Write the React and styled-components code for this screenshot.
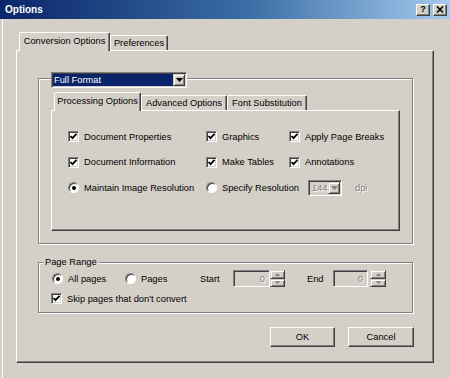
import React from 'react';
import styled, { createGlobalStyle } from 'styled-components';

const GlobalStyle = createGlobalStyle`
  html, body {
    margin: 0;
    padding: 0;
    background: #d4d0c8;
  }
  body {
    font-family: "Liberation Sans", Arial, sans-serif;
    font-size: 9.3px;
    color: #000;
  }
  #root {
    width: 450px;
    height: 378px;
    overflow: hidden;
  }
`;

const Window = styled.div`
  width: 450px;
  height: 378px;
  box-sizing: border-box;
  background: #d4d0c8;
  box-shadow: inset 2px 0 0 #d4d0c8, inset 3px 0 0 #fff;
  display: flex;
  flex-direction: column;
`;

const TitleBar = styled.div`
  height: 19px;
  flex: none;
  display: flex;
  align-items: center;
  justify-content: space-between;
  padding: 0 3px 0 5px;
  background: linear-gradient(to right, #0a246a 0%, #3a6ea5 55%, #a6caf0 100%);
`;

const Title = styled.span`
  color: #fff;
  font-weight: bold;
  font-size: 10px;
`;

const CaptionButtons = styled.div`
  display: flex;
  gap: 3px;
`;

const CaptionButton = styled.div`
  width: 14px;
  height: 12px;
  box-sizing: border-box;
  background: #d4d0c8;
  border: 1px solid;
  border-color: #fff #404040 #404040 #fff;
  box-shadow: inset -1px -1px 0 #808080;
  display: flex;
  align-items: center;
  justify-content: center;
  font-weight: bold;
  font-size: 9px;
  line-height: 1;
`;

const Body = styled.div`
  padding: 13px 0 0 16px;
`;

const TabStrip = styled.div`
  display: flex;
  align-items: flex-end;
  height: 18px;
  padding-left: ${(p) => p.$inset}px;
  margin-top: ${(p) => p.$top || 0}px;
  margin-left: ${(p) => p.$left || 0}px;
`;

const Tab = styled.div`
  box-sizing: border-box;
  width: ${(p) => p.$w}px;
  height: ${(p) => (p.$active ? 19 : 15)}px;
  margin-bottom: ${(p) => (p.$active ? -1 : 0)}px;
  padding-bottom: ${(p) => (p.$active ? 2 : 0)}px;
  position: relative;
  z-index: ${(p) => (p.$active ? 2 : 1)};
  background: #d4d0c8;
  border-top: 1px solid #fff;
  border-left: 1px solid #fff;
  border-right: 1px solid #404040;
  box-shadow: inset -1px 0 0 #808080;
  border-radius: 2px 2px 0 0;
  display: flex;
  align-items: center;
  justify-content: center;
  white-space: nowrap;
`;

const TabPanel = styled.div`
  box-sizing: border-box;
  width: ${(p) => p.$w}px;
  height: ${(p) => p.$h}px;
  margin-left: ${(p) => p.$left || 0}px;
  border: 1px solid;
  border-color: #fff #404040 #404040 #fff;
  box-shadow: inset -1px -1px 0 #808080;
  padding: ${(p) => p.$pad};
`;

const GroupBox = styled.div`
  box-sizing: border-box;
  width: 375px;
  height: ${(p) => p.$h}px;
  margin-top: ${(p) => p.$top || 0}px;
  border: 1px solid #808080;
  box-shadow: inset 1px 1px 0 #fff, 1px 1px 0 #fff;
  display: flex;
  flex-direction: column;
`;

const GroupCaption = styled.div`
  align-self: flex-start;
  margin: -6px 0 0 4px;
  padding: 0 2px;
  line-height: 11px;
  background: #d4d0c8;
`;

const Combo = styled.div`
  box-sizing: border-box;
  width: ${(p) => p.$w}px;
  height: ${(p) => p.$h}px;
  margin: ${(p) => p.$margin || 0};
  flex: none;
  border: 1px solid;
  border-color: #808080 #fff #fff #808080;
  box-shadow: inset 1px 1px 0 #404040, inset -1px -1px 0 #d4d0c8;
  background: ${(p) => (p.$disabled ? '#d4d0c8' : '#fff')};
  padding: 1px;
  display: flex;
  align-items: stretch;
`;

const ComboValue = styled.div`
  flex: 1;
  display: flex;
  align-items: center;
  padding-left: ${(p) => (p.$selected ? 1 : 2)}px;
  background: ${(p) => (p.$selected ? '#0a246a' : 'transparent')};
  color: ${(p) => (p.$selected ? '#fff' : '#808080')};
  text-shadow: ${(p) => (p.$selected ? 'none' : '1px 1px 0 #fff')};
  white-space: nowrap;
`;

const ArrowButton = styled.div`
  box-sizing: border-box;
  width: ${(p) => p.$w || 12}px;
  flex: none;
  background: #d4d0c8;
  border: 1px solid;
  border-color: #d4d0c8 #404040 #404040 #d4d0c8;
  box-shadow: inset 1px 1px 0 #fff, inset -1px -1px 0 #808080;
  display: flex;
  align-items: center;
  justify-content: center;
`;

const OptionGrid = styled.div`
  display: grid;
  grid-template-columns: 138px 83px auto;
  grid-auto-rows: 25.5px;
  align-items: center;
`;

const Option = styled.div`
  display: flex;
  align-items: center;
  gap: 5px;
  white-space: nowrap;
  grid-column: ${(p) => (p.$span ? `span ${p.$span}` : 'auto')};
`;

const CheckBox = styled.span`
  box-sizing: border-box;
  width: 11px;
  height: 11px;
  flex: none;
  background: #fff;
  border: 1px solid;
  border-color: #808080 #fff #fff #808080;
  box-shadow: inset 1px 1px 0 #404040, inset -1px -1px 0 #d4d0c8;
  display: flex;
  align-items: center;
  justify-content: center;
`;

const Radio = styled.span`
  box-sizing: border-box;
  width: 11px;
  height: 11px;
  flex: none;
  border-radius: 50%;
  background: #fff;
  border: 1px solid;
  border-color: #808080 #fff #fff #808080;
  box-shadow: inset 1px 1px 0 #404040;
  display: flex;
  align-items: center;
  justify-content: center;
`;

const RadioDot = styled.span`
  width: 4px;
  height: 4px;
  border-radius: 50%;
  background: #000;
`;

const DisabledText = styled.span`
  color: #808080;
  text-shadow: 1px 1px 0 #fff;
  margin-left: ${(p) => p.$left || 0}px;
`;

const RangeRow = styled.div`
  display: flex;
  align-items: center;
  height: ${(p) => p.$h}px;
  margin-top: ${(p) => p.$top}px;
  padding-left: ${(p) => p.$left}px;
`;

const Cell = styled.div`
  width: ${(p) => p.$w}px;
  flex: none;
  display: flex;
  align-items: center;
  gap: 5px;
  white-space: nowrap;
`;

const SpinField = styled.div`
  display: flex;
  height: 17px;
  gap: ${(p) => p.$gap || 0}px;
`;

const Field = styled.div`
  box-sizing: border-box;
  width: ${(p) => p.$w}px;
  height: 17px;
  border: 1px solid;
  border-color: #808080 #fff #fff #808080;
  box-shadow: inset 1px 1px 0 #404040, inset -1px -1px 0 #d4d0c8;
  background: #d4d0c8;
  color: #808080;
  text-shadow: 1px 1px 0 #fff;
  display: flex;
  align-items: center;
  justify-content: flex-end;
  padding-right: 4px;
`;

const Spinner = styled.div`
  width: ${(p) => p.$w}px;
  display: flex;
  flex-direction: column;
`;

const SpinButton = styled.div`
  flex: 1;
  box-sizing: border-box;
  background: #d4d0c8;
  border: 1px solid;
  border-color: #d4d0c8 #404040 #404040 #d4d0c8;
  box-shadow: inset 1px 1px 0 #fff, inset -1px -1px 0 #808080;
  display: flex;
  align-items: center;
  justify-content: center;
`;

const ButtonRow = styled.div`
  width: 376px;
  margin-top: 14px;
  display: flex;
  justify-content: flex-end;
  gap: 13px;
`;

const PushButton = styled.div`
  box-sizing: border-box;
  width: ${(p) => p.$w}px;
  height: 20px;
  background: #d4d0c8;
  border: 1px solid;
  border-color: #fff #404040 #404040 #fff;
  box-shadow: inset -1px -1px 0 #808080;
  display: flex;
  align-items: center;
  justify-content: center;
`;

const Check = () => (
  <svg width="9" height="9" viewBox="0 0 9 9">
    <polyline points="1.5,4 3.5,6.2 7.5,1.8" fill="none" stroke="#000" strokeWidth="1.8" />
  </svg>
);

const Arrow = ({ color = '#000', up }) => (
  <svg width="7" height="4" viewBox="0 0 7 4">
    <polygon points={up ? '0,4 7,4 3.5,0' : '0,0 7,0 3.5,4'} fill={color} />
  </svg>
);

const SmallArrow = ({ up }) => (
  <svg width="5" height="3" viewBox="0 0 5 3">
    <polygon points={up ? '0,3 5,3 2.5,0' : '0,0 5,0 2.5,3'} fill="#808080" />
  </svg>
);

const CloseGlyph = () => (
  <svg width="8" height="7" viewBox="0 0 8 7">
    <path d="M1 0.5 L7 6.5 M7 0.5 L1 6.5" stroke="#000" strokeWidth="1.6" />
  </svg>
);

const CheckOption = ({ label, span }) => (
  <Option $span={span}>
    <CheckBox><Check /></CheckBox>
    {label}
  </Option>
);

const RadioMark = ({ checked }) => (
  <Radio>{checked ? <RadioDot /> : null}</Radio>
);

const SpinBox = ({ w, spinW, gap }) => (
  <SpinField $gap={gap}>
    <Field $w={w}>0</Field>
    <Spinner $w={spinW}>
      <SpinButton><SmallArrow up /></SpinButton>
      <SpinButton><SmallArrow /></SpinButton>
    </Spinner>
  </SpinField>
);

const App = () => (
  <Window>
    <GlobalStyle />
    <TitleBar>
      <Title>Options</Title>
      <CaptionButtons>
        <CaptionButton>?</CaptionButton>
        <CaptionButton><CloseGlyph /></CaptionButton>
      </CaptionButtons>
    </TitleBar>
    <Body>
      <TabStrip $inset={3}>
        <Tab $w={91} $active>Conversion Options</Tab>
        <Tab $w={58}>Preferences</Tab>
      </TabStrip>
      <TabPanel $w={418} $h={313} $pad="27px 0 0 21px">
        <GroupBox $h={166}>
          <Combo $w={136} $h={16} $margin="-7px 0 0 12px">
            <ComboValue $selected>Full Format</ComboValue>
            <ArrowButton $w={12}><Arrow /></ArrowButton>
          </Combo>
          <TabStrip $inset={3} $top={4} $left={12}>
            <Tab $w={87} $active>Processing Options</Tab>
            <Tab $w={86}>Advanced Options</Tab>
            <Tab $w={80}>Font Substitution</Tab>
          </TabStrip>
          <TabPanel $w={349} $h={121} $left={12} $pad="13px 0 0 16px">
            <OptionGrid>
              <CheckOption label="Document Properties" />
              <CheckOption label="Graphics" />
              <CheckOption label="Apply Page Breaks" />
              <CheckOption label="Document Information" />
              <CheckOption label="Make Tables" />
              <CheckOption label="Annotations" />
              <Option>
                <RadioMark checked />
                Maintain Image Resolution
              </Option>
              <Option $span={2}>
                <RadioMark />
                Specify Resolution
                <Combo $w={34} $h={16} $margin="0 0 0 4px" $disabled>
                  <ComboValue>144</ComboValue>
                  <ArrowButton $w={12}><Arrow color="#808080" /></ArrowButton>
                </Combo>
                <DisabledText $left={8}>dpi</DisabledText>
              </Option>
            </OptionGrid>
          </TabPanel>
        </GroupBox>
        <GroupBox $h={51} $top={18}>
          <GroupCaption>Page Range</GroupCaption>
          <RangeRow $h={17} $top={2} $left={13}>
            <Cell $w={73}><RadioMark checked />All pages</Cell>
            <Cell $w={75}><RadioMark />Pages</Cell>
            <Cell $w={33}>Start</Cell>
            <Cell $w={74}><SpinBox w={37} spinW={15} /></Cell>
            <Cell $w={26}>End</Cell>
            <Cell $w={54}><SpinBox w={35} spinW={16} gap={2} /></Cell>
          </RangeRow>
          <RangeRow $h={13} $top={5} $left={12}>
            <Cell $w={200}>
              <CheckBox><Check /></CheckBox>
              Skip pages that don't convert
            </Cell>
          </RangeRow>
        </GroupBox>
        <ButtonRow>
          <PushButton $w={65}>OK</PushButton>
          <PushButton $w={66}>Cancel</PushButton>
        </ButtonRow>
      </TabPanel>
    </Body>
  </Window>
);

export default App;
